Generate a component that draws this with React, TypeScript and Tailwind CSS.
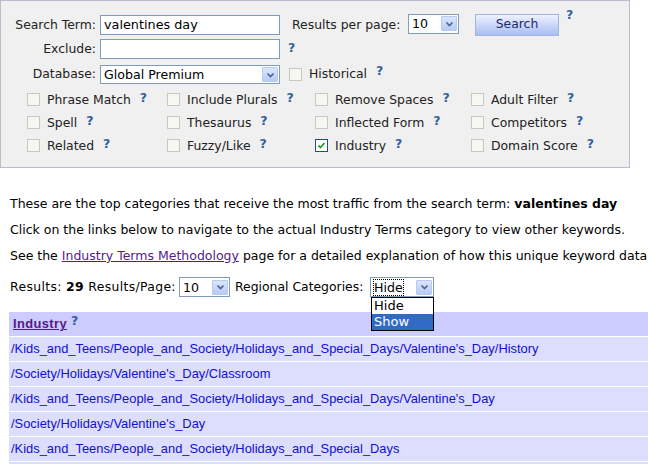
import React from "react";

const verdana = { fontFamily: '"DejaVu Sans", Verdana, sans-serif' };
const tahoma = { fontFamily: '"Liberation Sans", Tahoma, sans-serif' };

// little blue help mark
const Help = ({ className = "" }: { className?: string }) => (
  <span
    className={`inline-block self-start text-[12.5px] font-bold leading-none text-[#31609c] ${className}`}
    style={verdana}
  >
    ?
  </span>
);

const Check = ({ checked = false }: { checked?: boolean }) =>
  checked ? (
    <span className="flex h-[13px] w-[13px] shrink-0 items-center justify-center border border-[#1c5180] bg-white">
      <svg width="9" height="9" viewBox="0 0 9 9">
        <path d="M1.5 4.5 L3.5 6.5 L7.5 2" fill="none" stroke="#21a121" strokeWidth="1.8" />
      </svg>
    </span>
  ) : (
    <span className="block h-[13px] w-[13px] shrink-0 border border-[#cac8bb] bg-[#f6f6f3]" />
  );

const Arrow = () => (
  <span className="flex h-[15px] w-[16px] shrink-0 items-center justify-center rounded-[1px] border border-[#b9c9ef] bg-gradient-to-b from-[#dbe5fd] to-[#b6cbf9]">
    <svg width="9" height="6" viewBox="0 0 9 6">
      <path d="M1.5 1.5 L4.5 4.5 L7.5 1.5" fill="none" stroke="#4d6185" strokeWidth="1.6" />
    </svg>
  </span>
);

const Select = ({ value, width, height = 20, focus = false }: { value: string; width: string; height?: number; focus?: boolean }) => (
  <div
    className={`flex shrink-0 items-center justify-between border border-[#7f9db9] bg-white pl-[3px] pr-[1px] ${width}`}
    style={{ height }}
  >
    <span
      className={`text-[12.6px] leading-[15px] text-black ${focus ? "outline-1 outline-dotted outline-black" : ""}`}
      style={verdana}
    >
      {value}
    </span>
    <Arrow />
  </div>
);

const opts: [string, boolean][][] = [
  [["Phrase Match", false], ["Spell", false], ["Related", false]],
  [["Include Plurals", false], ["Thesaurus", false], ["Fuzzy/Like", false]],
  [["Remove Spaces", false], ["Inflected Form", false], ["Industry", true]],
  [["Adult Filter", false], ["Competitors", false], ["Domain Score", false]],
];
const colW = ["w-[140px]", "w-[148px]", "w-[156px]", "w-[150px]"];

const rows = [
  "/Kids_and_Teens/People_and_Society/Holidays_and_Special_Days/Valentine's_Day/History",
  "/Society/Holidays/Valentine's_Day/Classroom",
  "/Kids_and_Teens/People_and_Society/Holidays_and_Special_Days/Valentine's_Day",
  "/Society/Holidays/Valentine's_Day",
  "/Kids_and_Teens/People_and_Society/Holidays_and_Special_Days",
  "/Society/Holidays/Valentine's_Day/Gifts",
];

export default function App() {
  return (
    <div className="h-[464px] w-[648px] overflow-hidden bg-white text-black">
      {/* search form */}
      <div className="h-[168px] w-[630px] border border-[#bcbccc] bg-[#f0f0f0] pt-[14px] text-[12.4px] text-[#222]" style={verdana}>
        <div className="flex h-[20px] items-center">
          <label className="w-[95px] text-right">Search Term:</label>
          <div className="ml-[4px] flex h-[20px] w-[180px] shrink-0 items-center border border-[#7f9db9] bg-white pl-[3px] text-[12.8px] text-black">
            valentines day
          </div>
          <span className="ml-[12px] w-[113px] shrink-0">Results per page:</span>
          <div className="ml-[3px] -mt-[3px]">
            <Select value="10" width="w-[51px]" />
          </div>
          <button className="ml-[16px] -mt-[1px] h-[22px] w-[84px] shrink-0 border border-[#a2b4e3] bg-gradient-to-b from-[#eef2fe] to-[#a9bdf3] text-[12.4px] text-[#1b2a6b]" style={verdana}>
            Search
          </button>
          <Help className="ml-[7px] -mt-[6px]" />
        </div>

        <div className="mt-[4px] flex h-[20px] items-center">
          <label className="w-[95px] text-right">Exclude:</label>
          <div className="ml-[4px] h-[20px] w-[180px] border border-[#7f9db9] bg-white" />
          <Help className="ml-[8px] mt-[3px]" />
        </div>

        <div className="mt-[6px] flex h-[19px] items-center">
          <label className="w-[95px] text-right">Database:</label>
          <div className="ml-[4px]">
            <Select value="Global Premium" width="w-[180px]" height={19} />
          </div>
          <span className="ml-[9px]"><Check /></span>
          <span className="ml-[7px]">Historical</span>
          <Help className="ml-[9px]" />
        </div>

        <div className="ml-[26px] mt-[9px] flex">
          {opts.map((col, ci) => (
            <div key={ci} className={`flex flex-col ${colW[ci]}`}>
              {col.map(([name, on]) => (
                <div key={name} className="flex h-[23px] items-start">
                  <Check checked={on} />
                  <span className="ml-[7px] -mt-[1px] leading-[16px]">{name}</span>
                  <Help className="ml-[9px] -mt-[1px]" />
                </div>
              ))}
            </div>
          ))}
        </div>
      </div>

      {/* results text */}
      <div className="whitespace-nowrap pl-[10px] text-[12.5px] leading-[26px] text-black" style={verdana}>
        <p className="mt-[23px]">
          These are the top categories that receive the most traffic from the search term: <b>valentines day</b>
        </p>
        <p>Click on the links below to navigate to the actual Industry Terms category to view other keywords.</p>
        <p>
          See the <a className="text-[#551a8b] underline">Industry Terms Methodology</a> page for a detailed explanation of how this unique keyword database was compiled.
        </p>
        <div className="relative mt-[8px] flex h-[20px] items-center text-[12.4px]">
          <span className="w-[165px] shrink-0 tracking-[0.35px]">
            Results: <b>29</b> Results/Page:
          </span>
          <div className="ml-[4px]">
            <Select value="10" width="w-[51px]" />
          </div>
          <span className="ml-[5px] w-[133px] shrink-0">Regional Categories:</span>
          <div className="ml-[2px]">
            <Select value="Hide" width="w-[64px]" focus />
          </div>
          <div className="absolute left-[361px] top-[20px] z-10 w-[63px] border border-black bg-white text-[13px] leading-[16px]" style={verdana}>
            <div className="px-[2px]">Hide</div>
            <div className="bg-[#316ac5] px-[2px] text-white">Show</div>
          </div>
        </div>
      </div>

      {/* industry table */}
      <div className="ml-[9px] mt-[15px] flex w-[660px] flex-col gap-[1px] whitespace-nowrap text-[12.9px]" style={tahoma}>
        <div className="flex h-[24px] items-center bg-[#ccccfe] pl-[4px]">
          <a className="font-bold tracking-[0.4px] text-[#551a8b] underline">Industry</a>
          <Help className="ml-[4px] mt-[3px] text-[#7c9fcd]" />
        </div>
        {rows.map((r) => (
          <div key={r} className="flex h-[24px] items-center bg-[#ddddfe] pl-[2px] text-[#1010d0]">
            {r}
          </div>
        ))}
      </div>
    </div>
  );
}
